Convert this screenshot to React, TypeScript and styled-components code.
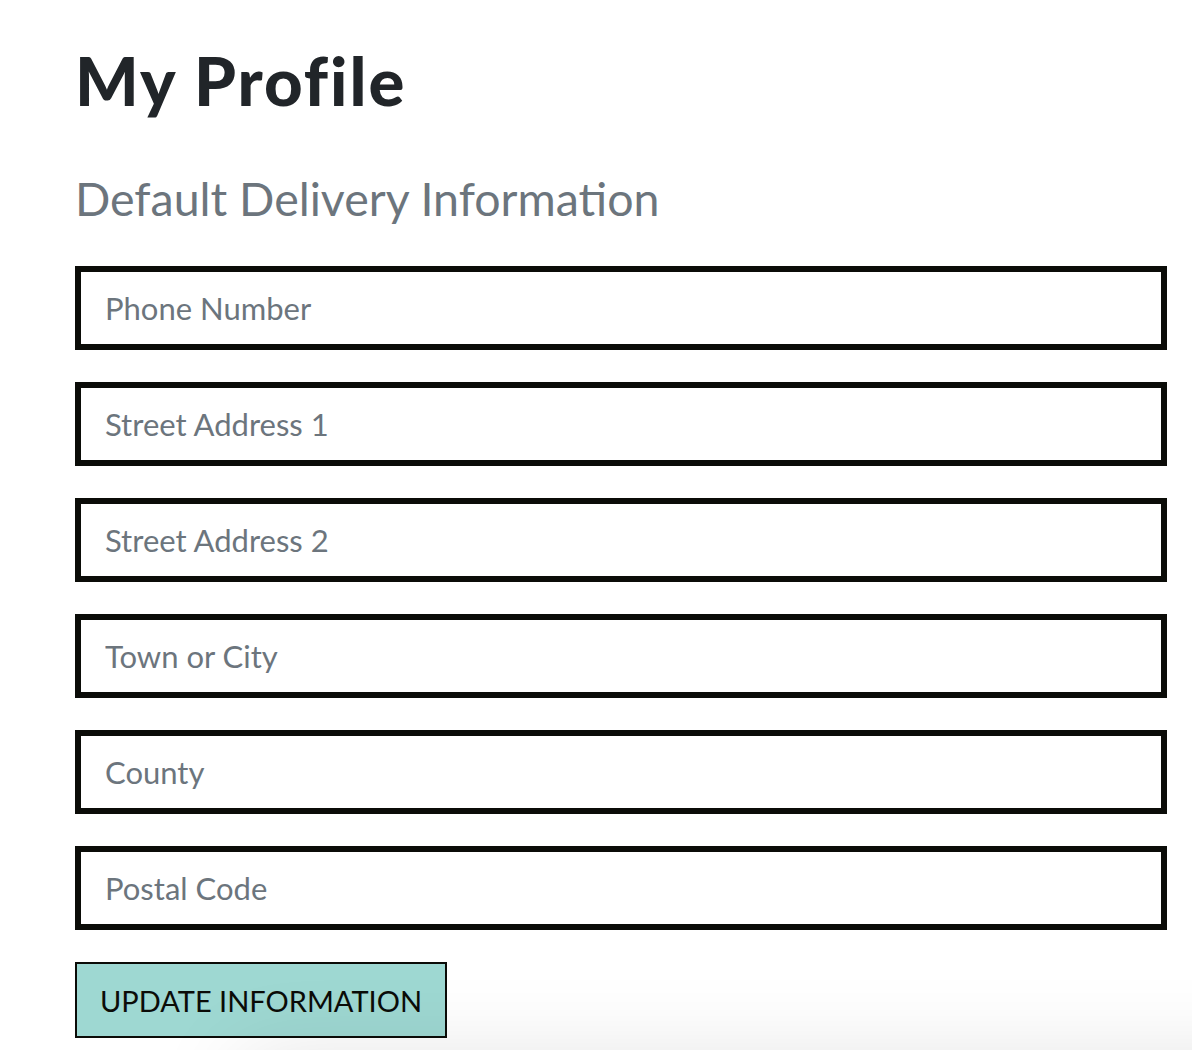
import React from "react";
import styled, { createGlobalStyle } from "styled-components";

const Global = createGlobalStyle`
  html, body { margin: 0; padding: 0; background: #ffffff; }
  body { font-family: "Lato", "Open Sans", sans-serif; overflow: hidden; }
  * { box-sizing: border-box; }
`;

const Page = styled.main`
  width: 1192px;
  height: 1050px;
  padding: 40px 25px 0 75px;
  display: flex;
  flex-direction: column;
`;

const Title = styled.h1`
  margin: 0;
  font-family: "Lato", sans-serif;
  font-weight: 900;
  font-size: 67px;
  line-height: 80px;
  color: #212529;
  letter-spacing: 2px;
`;

const Subtitle = styled.h2`
  margin: 48px 0 0;
  font-family: "Lato", sans-serif;
  font-weight: 400;
  font-size: 46.5px;
  line-height: 60px;
  color: #6c757d;
`;

const Form = styled.form`
  margin-top: 38px;
  display: flex;
  flex-direction: column;
  gap: 32px;
`;

const Field = styled.input`
  width: 100%;
  height: 84px;
  border: 6px solid #0b0c08;
  border-radius: 0;
  padding: 0 24px;
  font-family: "Lato", sans-serif;
  font-size: 31px;
  color: #495057;
  background: #fff;
  outline: none;
  &::placeholder { color: #6c757d; opacity: 1; }
`;

const Button = styled.button`
  align-self: flex-start;
  margin-top: 32px;
  width: 372px;
  height: 76px;
  border: 2px solid #0b0c08;
  border-radius: 0;
  background: #9ed8d2;
  color: #0b0c08;
  font-family: "Lato", sans-serif;
  font-size: 29px;
  text-transform: uppercase;
  padding: 0;
`;

const Shade = styled.div`
  position: fixed;
  left: 250px;
  right: -100px;
  top: 1070px;
  height: 100px;
  box-shadow: 0 0 90px 10px rgba(0, 0, 0, 0.12);
  pointer-events: none;
`;

const fields = [
  "Phone Number",
  "Street Address 1",
  "Street Address 2",
  "Town or City",
  "County",
  "Postal Code",
];

export default function App() {
  return (
    <>
      <Global />
      <Page>
        <Title>My Profile</Title>
        <Subtitle>Default Delivery Information</Subtitle>
        <Form onSubmit={(e) => e.preventDefault()}>
          {fields.map((f) => (
            <Field key={f} placeholder={f} aria-label={f} />
          ))}
        </Form>
        <Button type="button">Update Information</Button>
      </Page>
      <Shade />
    </>
  );
}
